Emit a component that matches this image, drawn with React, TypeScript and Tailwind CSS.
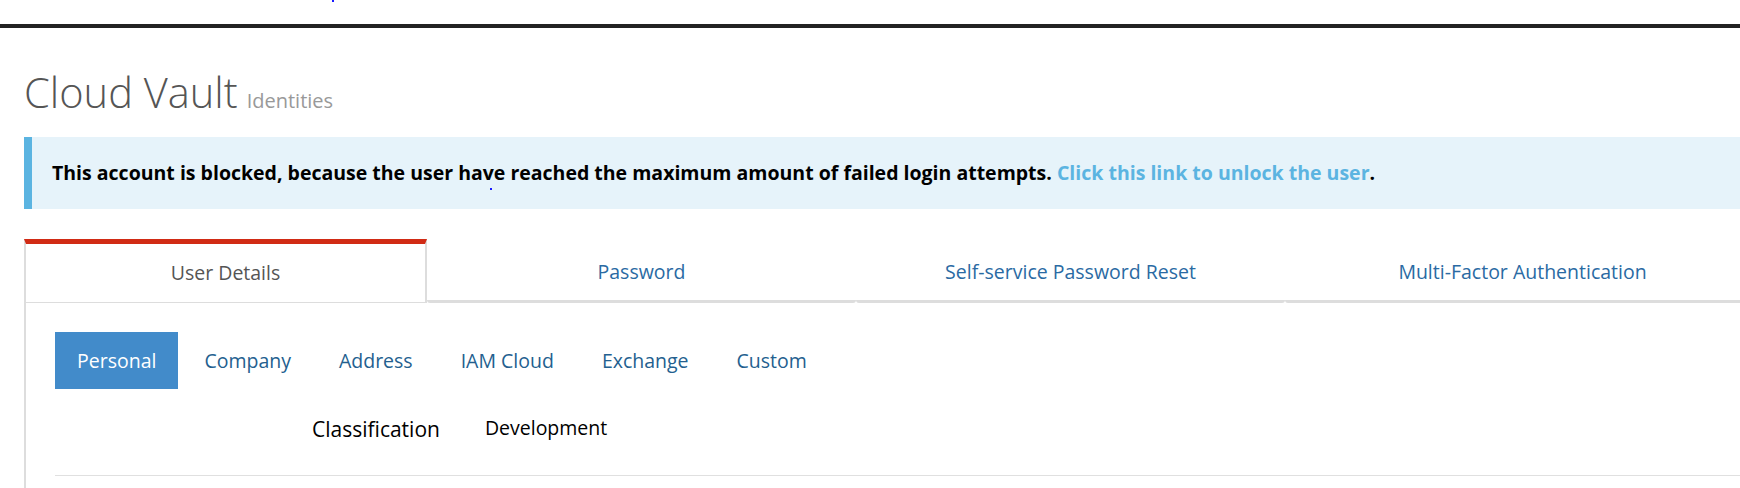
import React from "react";

const TABS = [
  { label: "Password", width: "w-[429px]" },
  { label: "Self-service Password Reset", width: "w-[429px]" },
  { label: "Multi-Factor Authentication", width: "w-[475px]" },
];

const SUB_NAV = ["Company", "Address", "IAM Cloud", "Exchange", "Custom"];

export default function App() {
  return (
    <div className="relative w-full h-[488px] overflow-hidden bg-white font-['Open_Sans',sans-serif]">
      {/* stray caret dots */}
      <span className="absolute left-[332px] top-0 w-[2px] h-[2px] bg-[#1a1aff]" />
      <span className="absolute left-[490px] top-[188px] w-[2px] h-[2px] bg-[#1a1aff]" />

      <div className="h-[24px]" />
      <div className="h-[4px] bg-[#222]" />

      <div className="w-[1760px] pl-[24px]">
        <h1 className="mt-[40px] flex items-baseline gap-[9px] leading-[48px]">
          <span className="text-[41.6px] font-light text-[#555]">Cloud Vault</span>
          <span className="text-[20px] leading-none font-normal text-[#999]">Identities</span>
        </h1>

        <div className="mt-[21px] h-[72px] flex items-center border-l-[8px] border-[#5bb4e1] bg-[#e6f3fa] pl-[20px]">
          <p className="text-[19.5px] font-bold text-black whitespace-nowrap">
            This account is blocked, because the user have reached the maximum amount of failed login attempts.{" "}
            <a className="text-[#5bb4e1] cursor-pointer">Click this link to unlock the user</a>.
          </p>
        </div>

        <div className="mt-[30px] flex">
          <div className="w-[403px] h-[64px] flex items-center justify-center border-t-[5px] border-t-[#d12b15] border-x-2 border-x-[#ddd] border-b border-b-[#ddd] text-[19.5px] text-[#555]">
            User Details
          </div>
          {TABS.map((t) => (
            <div
              key={t.label}
              className={`${t.width} h-[64px] pt-[5px] flex items-center justify-center border-b-[3px] border-[#ddd] rounded-b-[3px] text-[19.5px] text-[#2a6aa3]`}
            >
              {t.label}
            </div>
          ))}
        </div>

        <div className="border-l-2 border-[#ddd] pl-[29px] pt-[29px] pb-10">
          <nav className="flex gap-[4px]">
            <span className="h-[57px] px-[22px] flex items-center bg-[#428bca] text-[19.5px] text-white">Personal</span>
            {SUB_NAV.map((item) => (
              <span key={item} className="h-[57px] px-[22px] flex items-center text-[19.5px] text-[#245f8f]">
                {item}
              </span>
            ))}
          </nav>

          <div className="mt-[25px] flex items-start">
            <span className="ml-[257px] text-[21px] leading-[30px] text-black">Classification</span>
            <span className="ml-[45px] text-[19.5px] leading-[28px] text-black">Development</span>
          </div>

          <div className="mt-[31px] h-px bg-[#e0e0e0]" />
        </div>
      </div>
    </div>
  );
}
